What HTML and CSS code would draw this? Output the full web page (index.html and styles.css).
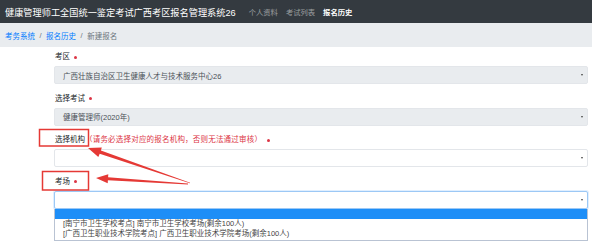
FILE: index.html
```html
<!DOCTYPE html>
<html lang="zh-CN">
<head>
    <meta charset="UTF-8">
    <title>新建报名</title>
    <link rel="stylesheet" href="styles.css">
</head>
<body>
    <nav class="navbar">
        <span class="brand">健康管理师工全国统一鉴定考试广西考区报名管理系统26</span>
        <a class="nav-link">个人资料</a>
        <a class="nav-link">考试列表</a>
        <a class="nav-link active">报名历史</a>
    </nav>

    <div class="breadcrumb">
        <a>考务系统</a>
        <span class="sep">/</span>
        <a>报名历史</a>
        <span class="sep">/</span>
        <span class="current">新建报名</span>
    </div>

    <div class="form">
        <div class="form-group">
            <label>考区 <span class="req"></span></label>
            <div class="select disabled">
                <span>广西壮族自治区卫生健康人才与技术服务中心26</span>
                <i class="caret"></i>
            </div>
        </div>
        <div class="form-group">
            <label>选择考试 <span class="req"></span></label>
            <div class="select disabled">
                <span>健康管理师(2020年)</span>
                <i class="caret"></i>
            </div>
        </div>
        <div class="form-group">
            <label>选择机构<span class="hint">（请务必选择对应的报名机构，否则无法通过审核）</span><span class="req"></span></label>
            <div class="select">
                <span></span>
                <i class="caret"></i>
            </div>
        </div>
        <div class="form-group">
            <label>考场 <span class="req"></span></label>
            <div class="select-wrap">
                <div class="select focus">
                    <span></span>
                    <i class="caret"></i>
                </div>
                <div class="dropdown">
                    <div class="option selected">&nbsp;</div>
                    <div class="option">[南宁市卫生学校考点] 南宁市卫生学校考场(剩余100人)</div>
                    <div class="option">[广西卫生职业技术学院考点] 广西卫生职业技术学院考场(剩余100人)</div>
                </div>
            </div>
        </div>
    </div>

    <!-- red annotations drawn over the screenshot -->
    <svg class="marks" width="592" height="248" viewBox="0 0 592 248">
        <rect x="39.5" y="129.5" width="49" height="16.5" fill="none" stroke="#e53935" stroke-width="1.5"/>
        <rect x="42.5" y="171.5" width="46" height="18.5" fill="none" stroke="#e53935" stroke-width="1.5"/>
        <polygon fill="#e53935" points="88,148 101.8,147.4 100.9,150.6 190.1,182.7 189.9,183.3 99.7,153.8 98.3,157"/>
        <polygon fill="#e53935" points="96,178 108.3,174.3 108.1,177.3 188,183.6 188,184.4 107.9,180.3 107.7,183.3"/>
    </svg>
</body>
</html>
```

FILE: styles.css
```css
body {
    margin: 0;
    position: relative;
    width: 592px;
    height: 248px;
    overflow: hidden;
    font-family: "Liberation Sans", "Noto Sans CJK SC", sans-serif;
    font-size: 7.5px;
    color: #212529;
    background: #fff;
}
.navbar {
    display: flex;
    align-items: center;
    height: 23px;
    padding-left: 5px;
    background-color: #343a40;
}
.brand {
    font-size: 9.2px;
    color: #fff;
    margin-right: 13px;
}
.nav-link {
    font-size: 7.3px;
    color: rgba(255, 255, 255, 0.5);
    margin-right: 8px;
}
.nav-link.active {
    color: #fff;
    font-weight: bold;
}
.breadcrumb {
    display: flex;
    align-items: center;
    height: 24px;
    padding-left: 5px;
    background-color: #e9ecef;
}
.breadcrumb a {
    color: #007bff;
}
.breadcrumb .sep {
    color: #6c757d;
    margin: 0 4.5px;
}
.breadcrumb .current {
    color: #6c757d;
}
.form {
    padding: 5px 4px 0 54px;
}
.form-group {
    margin-bottom: 9.5px;
}
.form-group label {
    display: block;
    line-height: 10px;
    height: 10px;
    margin-bottom: 4px;
    padding-left: 1px;
}
.req {
    display: inline-block;
    width: 3px;
    height: 3px;
    border-radius: 50%;
    background: #dc3545;
    vertical-align: middle;
    margin-left: 2px;
}
.hint {
    color: #dc3545;
    letter-spacing: 0.2px;
    margin-right: 3px;
}
.select {
    display: flex;
    align-items: center;
    justify-content: space-between;
    box-sizing: border-box;
    height: 18px;
    padding: 0 4px 0 8px;
    border: 1px solid #e3e6ea;
    border-radius: 2px;
    color: #495057;
    background: #fff;
}
.select.disabled {
    background-color: #e9ecef;
}
.select.focus {
    border-color: #9cc8f5;
    box-shadow: 0 0 0 1px rgba(0, 123, 255, 0.12);
}
.caret {
    width: 0;
    height: 0;
    border-left: 1.5px solid transparent;
    border-right: 1.5px solid transparent;
    border-top: 2.5px solid #444;
}
.select-wrap {
    position: relative;
}
.dropdown {
    position: absolute;
    top: 18px;
    left: 0;
    right: 0;
    height: 32px;
    box-sizing: border-box;
    border: 1px solid #b9c3d3;
    border-top: none;
    background: #fff;
}
.option {
    line-height: 10px;
    height: 10px;
    padding-left: 8px;
    color: #444;
    white-space: nowrap;
}
.option.selected {
    background-color: #1e8ef7;
}
.marks {
    position: absolute;
    top: 0;
    left: 0;
    pointer-events: none;
}
```
